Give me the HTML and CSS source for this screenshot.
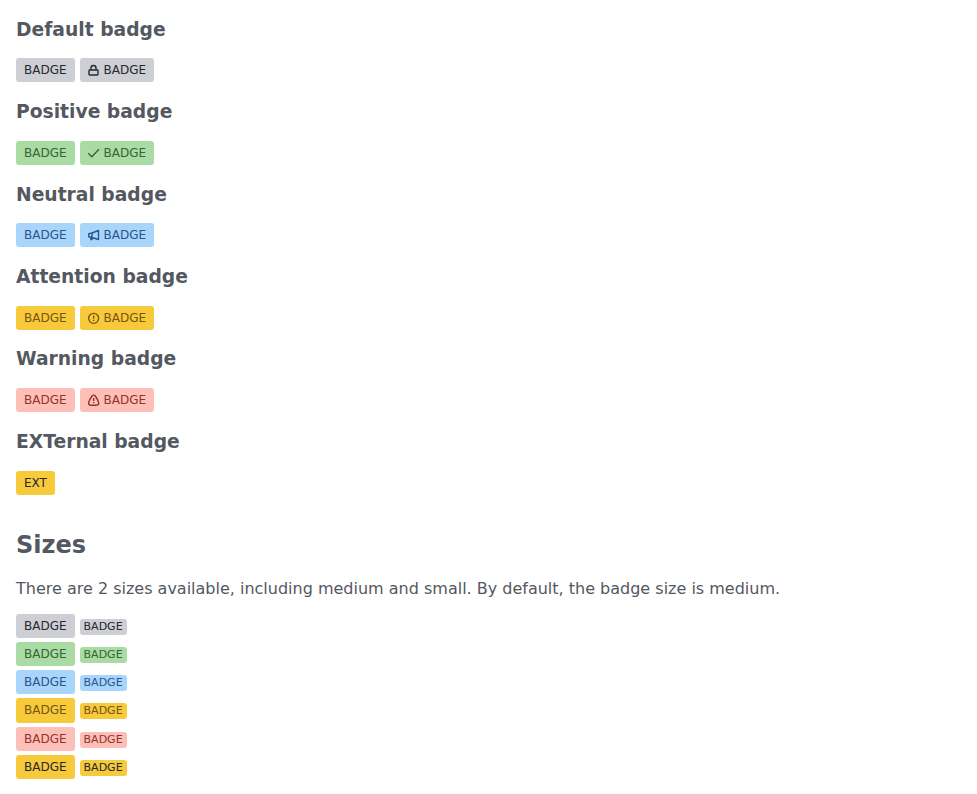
FILE: index.html
```html
<!DOCTYPE html>
<html lang="en">
<head>
<meta charset="utf-8">
<title>Badge</title>
<link rel="stylesheet" href="styles.css">
</head>
<body>
<main>
<h3>Default badge</h3>
<div class="row"><span class="badge">BADGE</span><span class="badge"><svg class="icon" viewBox="0 0 24 24"><rect x="2" y="12" width="18" height="10" rx="1.5"/><path d="M6 12V8a5 5 0 0 1 10 0v4"/></svg>BADGE</span></div>
<h3>Positive badge</h3>
<div class="row"><span class="badge positive">BADGE</span><span class="badge positive"><svg class="icon" viewBox="0 0 24 24"><path d="M0.500 12.500l7 7L22 4.500"/></svg>BADGE</span></div>
<h3>Neutral badge</h3>
<div class="row"><span class="badge neutral">BADGE</span><span class="badge neutral"><svg class="icon" viewBox="0 0 24 24"><path d="M21 3L8 8L1.500 9.500v6L8 17l13 4zM8 8v14M8 22Q5 21 5 17"/></svg>BADGE</span></div>
<h3>Attention badge</h3>
<div class="row"><span class="badge attention">BADGE</span><span class="badge attention"><svg class="icon" viewBox="0 0 24 24"><circle cx="11.300" cy="12.700" r="10"/><path d="M11.300 7v6.500M11.300 15.500v2.500"/></svg>BADGE</span></div>
<h3>Warning badge</h3>
<div class="row"><span class="badge warning">BADGE</span><span class="badge warning"><svg class="icon" viewBox="0 0 24 24"><path d="M8 4Q11.300 0.500 14.600 4Q19 10 21.300 17Q22 21 18.500 22Q11.300 23 4 22Q0.700 21 1.300 17Q3.500 10 8 4zM11.300 8v6M11.300 16v2.500"/></svg>BADGE</span></div>
<h3>EXTernal badge</h3>
<div class="row"><span class="badge external">EXT</span></div>
<h2>Sizes</h2>
<p>There are 2 sizes available, including medium and small. By default, the badge size is medium.</p>
<div class="sizes">
<div class="pair"><span class="badge">BADGE</span><span class="badge small">BADGE</span></div>
<div class="pair"><span class="badge positive">BADGE</span><span class="badge positive small">BADGE</span></div>
<div class="pair"><span class="badge neutral">BADGE</span><span class="badge neutral small">BADGE</span></div>
<div class="pair"><span class="badge attention">BADGE</span><span class="badge attention small">BADGE</span></div>
<div class="pair"><span class="badge warning">BADGE</span><span class="badge warning small">BADGE</span></div>
<div class="pair"><span class="badge external">BADGE</span><span class="badge external small">BADGE</span></div>
</div>
</main>
</body>
</html>
```
FILE: styles.css
```css
body {
  margin: 0;
  background: #fff;
  color: #535861;
  font: 16px/24px "DejaVu Sans", sans-serif;
}
main { padding: 18.77px 16px 0; }
h3 { margin: 0 0 17.72px; font-size: 18.72px; line-height: 22px; }
.row { display: flex; gap: 5px; height: 24px; margin-bottom: 18.69px; }
h2 { margin: 36px 0 18px; font-size: 24px; line-height: 28px; }
p { margin: 0 0 13.3px; }
.badge {
  display: inline-flex;
  align-items: center;
  box-sizing: border-box;
  height: 24px;
  padding: 0 8px;
  border-radius: 3px;
  font-size: 12px;
  line-height: 16px;
  background: #cecfd5;
  color: #26282d;
}
.icon {
  width: 12px;
  height: 12px;
  margin-right: 4px;
  overflow: visible;
  fill: none;
  stroke: currentColor;
  stroke-width: 2.75;
  stroke-linejoin: round;
}
.positive { background: #aadba5; color: #326731; }
.neutral { background: #aad5fa; color: #28558f; }
.attention { background: #f7ca3b; color: #795412; }
.warning { background: #fdc0b9; color: #96302c; }
.external { background: #f7ca3b; color: #26282d; }
.sizes { display: grid; gap: 4px; }
.pair { display: flex; gap: 5px; height: 24.2px; }
.pair .badge { height: 24.2px; }
.pair .small {
  height: 16px;
  margin-top: 5px;
  padding: 0 4px;
  font-size: 11px;
}
```
